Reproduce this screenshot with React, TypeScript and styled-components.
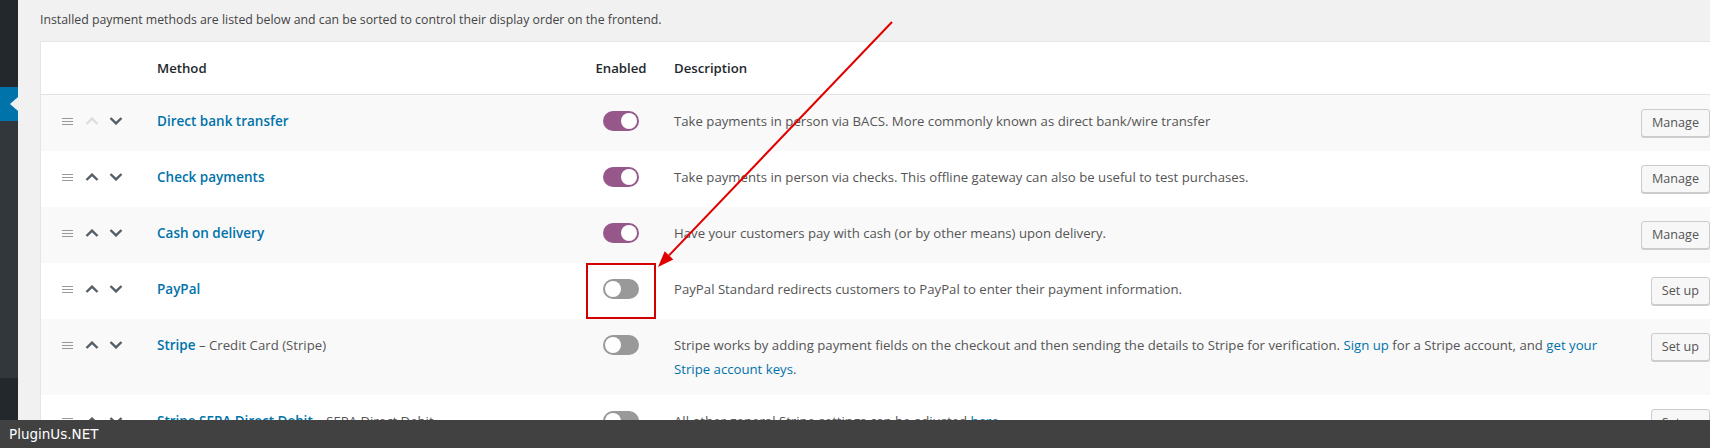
import React from 'react';
import styled, { createGlobalStyle } from 'styled-components';

const GlobalStyle = createGlobalStyle`
	html,
	body {
		margin: 0;
		padding: 0;
		background: #f1f1f1;
		overflow: hidden;
	}
	body {
		font-family: 'Open Sans', 'Noto Sans', sans-serif;
		color: #444;
	}
	a {
		color: #0073aa;
		text-decoration: none;
	}
`;

interface Gateway {
	id: string;
	title: string;
	subtitle?: string;
	enabled: boolean;
	description: React.ReactNode;
	action: string;
	first?: boolean;
	highlighted?: boolean;
}

const gateways: Gateway[] = [
	{
		id: 'bacs',
		title: 'Direct bank transfer',
		enabled: true,
		description: 'Take payments in person via BACS. More commonly known as direct bank/wire transfer',
		action: 'Manage',
		first: true
	},
	{
		id: 'cheque',
		title: 'Check payments',
		enabled: true,
		description: 'Take payments in person via checks. This offline gateway can also be useful to test purchases.',
		action: 'Manage'
	},
	{
		id: 'cod',
		title: 'Cash on delivery',
		enabled: true,
		description: 'Have your customers pay with cash (or by other means) upon delivery.',
		action: 'Manage'
	},
	{
		id: 'paypal',
		title: 'PayPal',
		enabled: false,
		description: 'PayPal Standard redirects customers to PayPal to enter their payment information.',
		action: 'Set up',
		highlighted: true
	},
	{
		id: 'stripe',
		title: 'Stripe',
		subtitle: 'Credit Card (Stripe)',
		enabled: false,
		description: (
			<>
				Stripe works by adding payment fields on the checkout and then sending the details to Stripe for verification.{' '}
				<a href="#">Sign up</a> for a Stripe account, and <a href="#">get your Stripe account keys</a>.
			</>
		),
		action: 'Set up'
	},
	{
		id: 'stripe_sepa',
		title: 'Stripe SEPA Direct Debit',
		subtitle: 'SEPA Direct Debit',
		enabled: false,
		description: (
			<>
				All other general Stripe settings can be adjusted <a href="#">here</a>.
			</>
		),
		action: 'Set up'
	}
];

// drag handle (three thin bars)
const HandleIcon = () => (
	<Handle width="11" height="8" viewBox="0 0 11 8">
		<path d="M0 0.5h11M0 3.5h11M0 6.5h11" stroke="#999" strokeWidth="1.2" />
	</Handle>
);

const ChevronIcon = ({ up, muted }: { up?: boolean; muted?: boolean }) => (
	<svg width="14" height="8" viewBox="0 0 14 8">
		<path
			d={up ? 'M1.5 7L7 1.6L12.5 7' : 'M1.5 1L7 6.4L12.5 1'}
			fill="none"
			stroke={muted ? '#ddd' : '#555d66'}
			strokeWidth="2.4"
		/>
	</svg>
);

const App = () => {
	return (
		<>
			<GlobalStyle />
			<Page>
				<Screen>
					<AdminMenu>
						<MenuBlock $height={87} $tone="#23282d" />
						<MenuCurrent />
						<MenuBlock $grow $tone="#32373c" />
						<MenuBlock $height={42} $tone="#23282d" />
					</AdminMenu>
					<Content>
						<Intro>Installed payment methods are listed below and can be sorted to control their display order on the frontend.</Intro>
						<GatewayTable>
							<HeaderRow>
								<HeadCell />
								<HeadCell $pad="0 0 0 10px">Method</HeadCell>
								<HeadCell $center>Enabled</HeadCell>
								<HeadCell $pad="0 0 0 18px">Description</HeadCell>
								<HeadCell />
							</HeaderRow>
							{gateways.map((g, i) => (
								<Row key={g.id} $striped={i % 2 === 0}>
									<SortCell>
										<HandleIcon />
										<SortButtons>
											<ChevronIcon up muted={g.first} />
											<ChevronIcon />
										</SortButtons>
									</SortCell>
									<NameCell>
										<MethodLink href="#">{g.title}</MethodLink>
										{g.subtitle && <Subtitle> – {g.subtitle}</Subtitle>}
									</NameCell>
									<StatusCell $highlighted={g.highlighted}>
										<Toggle $on={g.enabled}>
											<Knob />
										</Toggle>
									</StatusCell>
									<DescCell>{g.description}</DescCell>
									<ActionCell>
										<Button>{g.action}</Button>
									</ActionCell>
								</Row>
							))}
						</GatewayTable>
					</Content>
				</Screen>
				<Footer>PluginUs.NET</Footer>
				<Annotation width="1710" height="448" viewBox="0 0 1710 448">
					<line x1="892" y1="22" x2="669" y2="255.4" stroke="#e00000" strokeWidth="2" />
					<polygon points="658,267 673.3,259.5 664.7,251.3" fill="#e00000" />
				</Annotation>
			</Page>
		</>
	);
};

export default App;

const Page = styled.div`
	position: relative;
	width: 1710px;
	height: 448px;
	overflow: hidden;
	display: flex;
	flex-direction: column;
`;

const Screen = styled.div`
	display: flex;
	height: 420px;
	overflow: hidden;
`;

const AdminMenu = styled.div`
	width: 18px;
	flex-shrink: 0;
	display: flex;
	flex-direction: column;
`;

const MenuBlock = styled.div<{ $height?: number; $tone: string; $grow?: boolean }>`
	background: ${(p) => p.$tone};
	height: ${(p) => (p.$height ? `${p.$height}px` : 'auto')};
	flex: ${(p) => (p.$grow ? 1 : 'none')};
`;

const MenuCurrent = styled.div`
	position: relative;
	height: 34px;
	background: #0073aa;
	&::after {
		content: '';
		position: absolute;
		right: 0;
		top: 10px;
		border-right: 8px solid #f1f1f1;
		border-top: 7px solid transparent;
		border-bottom: 7px solid transparent;
	}
`;

const Content = styled.div`
	flex: 1;
	padding-left: 22px;
`;

const Intro = styled.p`
	margin: 0;
	padding-top: 9px;
	line-height: 22px;
	font-size: 12.3px;
	color: #444;
`;

const GatewayTable = styled.div`
	margin-top: 10px;
	background: #fff;
	border: 1px solid #e5e5e5;
	border-right: none;
`;

const columns = '106px 439px 70px 1fr 77px';

const HeaderRow = styled.div`
	display: grid;
	grid-template-columns: ${columns};
	border-bottom: 1px solid #e1e1e1;
	padding: 14px 0;
`;

const HeadCell = styled.div<{ $pad?: string; $center?: boolean }>`
	padding: ${(p) => p.$pad || '0'};
	text-align: ${(p) => (p.$center ? 'center' : 'left')};
	line-height: 24px;
	font-size: 13.2px;
	font-weight: 600;
	color: #23282d;
`;

const Row = styled.div<{ $striped: boolean }>`
	display: grid;
	grid-template-columns: ${columns};
	background: ${(p) => (p.$striped ? '#f9f9f9' : '#fff')};
`;

const Cell = styled.div`
	padding: 14px 0;
	line-height: 24px;
	font-size: 13.2px;
`;

const SortCell = styled(Cell)`
	display: flex;
	align-items: flex-start;
	padding-left: 21px;
`;

const Handle = styled.svg`
	margin-top: 9px;
`;

const SortButtons = styled.div`
	display: flex;
	gap: 10px;
	margin-left: 12px;
	margin-top: 8px;
	height: 8px;
	svg {
		display: block;
	}
`;

const NameCell = styled(Cell)`
	padding-left: 10px;
`;

const MethodLink = styled.a`
	font-weight: 600;
	font-size: 13.5px;
	color: #0073aa;
`;

const Subtitle = styled.span`
	color: #555;
`;

const StatusCell = styled(Cell)<{ $highlighted?: boolean }>`
	display: flex;
	justify-content: center;
	align-items: flex-start;
	box-shadow: ${(p) => (p.$highlighted ? 'inset 0 0 0 2px #d40000' : 'none')};
`;

const Toggle = styled.span<{ $on: boolean }>`
	box-sizing: border-box;
	margin-top: 2px;
	width: 36px;
	height: 20px;
	border-radius: 10px;
	padding: 2px;
	display: flex;
	justify-content: ${(p) => (p.$on ? 'flex-end' : 'flex-start')};
	background: ${(p) => (p.$on ? '#96588a' : '#999')};
`;

const Knob = styled.span`
	width: 16px;
	height: 16px;
	border-radius: 50%;
	background: #fff;
`;

const DescCell = styled(Cell)`
	padding-left: 18px;
	padding-right: 10px;
	color: #555;
`;

const ActionCell = styled(Cell)`
	display: flex;
	justify-content: flex-end;
	align-items: flex-start;
`;

const Button = styled.button`
	height: 28px;
	padding: 0 10px;
	border: 1px solid #ccc;
	border-radius: 3px;
	background: #f7f7f7;
	box-shadow: 0 1px 0 #ccc;
	font-family: inherit;
	font-size: 12.6px;
	line-height: 26px;
	color: #555;
	white-space: nowrap;
`;

const Footer = styled.div`
	height: 28px;
	background: #414141;
	color: #fff;
	font-family: 'DejaVu Sans', sans-serif;
	font-size: 13.5px;
	line-height: 28px;
	padding-left: 9px;
`;

const Annotation = styled.svg`
	position: absolute;
	top: 0;
	left: 0;
	pointer-events: none;
`;
